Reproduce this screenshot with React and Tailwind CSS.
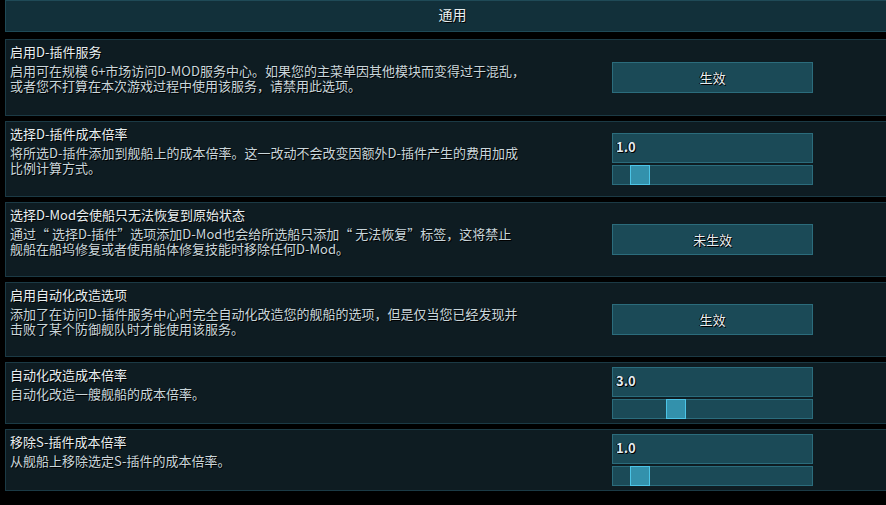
import React from "react";

const font = { fontFamily: '"Noto Sans CJK SC", "Noto Sans", sans-serif' };

function Button({ label }) {
  return (
    <div className="w-[201px] h-[31px] bg-[#1b4a57] border border-[#2b6c7c] flex items-center justify-center text-[13px] text-[#e8eef0] [text-shadow:1px_1px_0_#000,-1px_0_0_#000]">
      {label}
    </div>
  );
}

function Slider({ value }) {
  const left = (value / 10) * 180;
  return (
    <div className="w-[201px] flex flex-col gap-[2px]">
      <div className="h-[30px] bg-[#1b4a57] border border-[#2b6c7c] flex items-center pl-[3px] pb-[2px] text-[13px] font-bold text-[#e2ecf0] [text-shadow:1px_1px_0_#000,-1px_0_0_#000]">
        {value.toFixed(1)}
      </div>
      <div className="relative h-[20px] bg-[#1b4a57] border border-[#2b6c7c]">
        <div
          className="absolute top-[-1px] h-[20px] w-[20px] bg-[#3391ac] border border-[#4cc4e6]"
          style={{ left: left - 1 }}
        />
      </div>
    </div>
  );
}

function Card({ h, title, lines, control }) {
  return (
    <div
      className={`flex items-center bg-[#0e1c22] border-y border-l border-[#1b3a45] ${h}`}
    >
      <div className="flex-1 self-start pl-[4px] pt-[3px]">
        <div className="text-[13px] leading-[17px] text-[#e8eef0] [text-shadow:1px_1px_0_#000]">
          {title}
        </div>
        <div className="mt-[3px] text-[13px] leading-[15px] text-[#c9d6db] [text-shadow:1px_1px_0_#000]">
          {lines.map((l, i) => (
            <div key={i} className="whitespace-nowrap">
              {l}
            </div>
          ))}
        </div>
      </div>
      <div className="mr-[86px]">{control}</div>
    </div>
  );
}

export default function App() {
  return (
    <div className="w-[886px] h-[505px] bg-black overflow-hidden" style={font}>
      <div className="w-[894px] ml-[5px] flex flex-col">
        <div className="h-[32px] pb-[3px] bg-[#12303a] border-y border-l border-[#1f4a57] flex items-center justify-center text-[14px] text-[#e8eef0] [text-shadow:1px_1px_0_#000]">
          通用
        </div>
        <div className="mt-[7px] flex flex-col gap-[5px]">
          <Card
            h="h-[77px]"
            title="启用D-插件服务"
            lines={[
              "启用可在规模 6+市场访问D-MOD服务中心。如果您的主菜单因其他模块而变得过于混乱，",
              "或者您不打算在本次游戏过程中使用该服务，请禁用此选项。",
            ]}
            control={<Button label="生效" />}
          />
          <Card
            h="h-[76px]"
            title="选择D-插件成本倍率"
            lines={[
              "将所选D-插件添加到舰船上的成本倍率。这一改动不会改变因额外D-插件产生的费用加成",
              "比例计算方式。",
            ]}
            control={<Slider value={1} />}
          />
          <Card
            h="h-[75px]"
            title="选择D-Mod会使船只无法恢复到原始状态"
            lines={[
              "通过“ 选择D-插件”选项添加D-Mod也会给所选船只添加“ 无法恢复”标签，这将禁止",
              "舰船在船坞修复或者使用船体修复技能时移除任何D-Mod。",
            ]}
            control={<Button label="未生效" />}
          />
          <Card
            h="h-[75px]"
            title="启用自动化改造选项"
            lines={[
              "添加了在访问D-插件服务中心时完全自动化改造您的舰船的选项，但是仅当您已经发现并",
              "击败了某个防御舰队时才能使用该服务。",
            ]}
            control={<Button label="生效" />}
          />
          <Card
            h="h-[62px]"
            title="自动化改造成本倍率"
            lines={["自动化改造一艘舰船的成本倍率。"]}
            control={<Slider value={3} />}
          />
          <Card
            h="h-[62px]"
            title="移除S-插件成本倍率"
            lines={["从舰船上移除选定S-插件的成本倍率。"]}
            control={<Slider value={1} />}
          />
        </div>
      </div>
    </div>
  );
}
